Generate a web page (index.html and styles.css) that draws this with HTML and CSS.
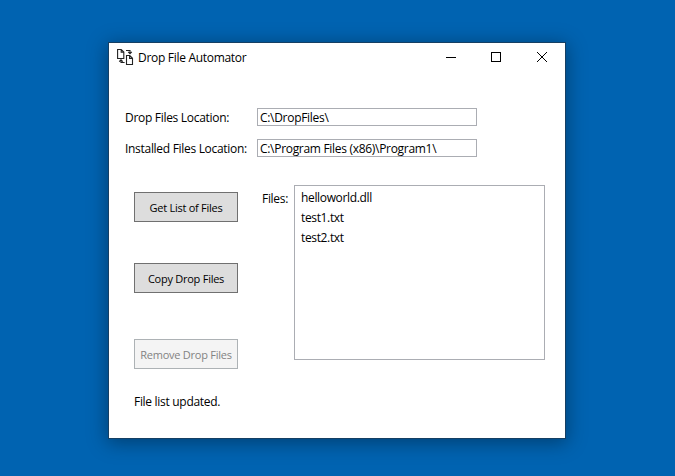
FILE: index.html
```html
<!DOCTYPE html>
<html lang="en">
<head>
<meta charset="utf-8">
<title>Drop File Automator</title>
<link rel="stylesheet" href="styles.css">
</head>
<body>
<main class="window">
  <header class="titlebar">
    <svg class="app-icon" width="17" height="18" viewBox="0 0 17 18" fill="none" stroke="#222" stroke-width="1.1">
      <path d="M.6 1.5H4.2L6.8 4V10.5H.6ZM4.2 1.5V4.2H6.8"/>
      <path d="M9.5 7.5H12.8L15.5 10.2V16.5H9.5ZM12.6 7.5V10.4H15.5"/>
      <path d="M9 2.5H13V5.4M11.2 3.8L13 5.6L14.8 3.8M7.6 14.5H4V12M2.2 13.6L4 11.8L5.8 13.6"/>
    </svg>
    <h1 class="title">Drop File Automator</h1>
    <div class="controls">
      <svg width="12" height="12" viewBox="0 0 12 12" stroke="#000" fill="none"><path d="M2 6.5H12"/></svg>
      <svg width="12" height="12" viewBox="0 0 12 12" stroke="#000" fill="none" shape-rendering="crispEdges"><path d="M1.5 1.5H10.5V10.5H1.5Z"/></svg>
      <svg width="12" height="12" viewBox="0 0 12 12" stroke="#000" fill="none"><path d="M1 1L11 11M11 1L1 11"/></svg>
    </div>
  </header>
  <section class="paths">
    <span class="label">Drop Files Location:</span>
    <div class="field">C:\DropFiles\</div>
    <span class="label">Installed Files Location:</span>
    <div class="field">C:\Program Files (x86)\Program1\</div>
  </section>
  <section class="work">
    <div class="actions">
      <button class="btn">Get List of Files</button>
      <button class="btn btn-copy">Copy Drop Files</button>
      <button class="btn" disabled>Remove Drop Files</button>
    </div>
    <span class="files-label">Files:</span>
    <ul class="files">
      <li>helloworld.dll</li>
      <li>test1.txt</li>
      <li>test2.txt</li>
    </ul>
  </section>
  <p class="status">File list updated.</p>
</main>
</body>
</html>
```
FILE: styles.css
```css
* { box-sizing: border-box; }
body {
  margin: 0;
  height: 476px;
  overflow: hidden;
  padding: 42px 0 0 108px;
  background: #0063b1;
  font: 12px/16px "Open Sans", "Noto Sans", sans-serif;
  letter-spacing: -0.3px;
  color: #000;
}
.window {
  width: 458px;
  height: 397px;
  border: 1px solid #153f63;
  background: #fff;
  box-shadow: 0 3px 18px 1px rgba(0, 0, 0, .35);
}
.titlebar {
  display: flex;
  height: 30px;
  padding-left: 8px;
}
.app-icon { margin: 5px 4px 0 0; }
.title {
  margin: 7px 0 0;
  font-size: 12px;
  font-weight: 400;
  line-height: 16px;
  white-space: nowrap;
}
.controls {
  display: flex;
  gap: 34px;
  margin: 8px 17px 0 auto;
}
.controls svg { display: block; }
.paths {
  display: grid;
  grid-template-columns: 132px 220px;
  row-gap: 13px;
  margin: 35px 0 0 16px;
}
.label { padding-top: 2px; white-space: nowrap; }
.field {
  height: 18px;
  padding-left: 2px;
  border: 1px solid #abadb3;
  line-height: 18px;
  white-space: nowrap;
}
.work {
  display: flex;
  height: 184px;
  margin: 28px 0 0 25px;
}
.actions {
  display: flex;
  flex-direction: column;
  width: 104px;
  padding-top: 7px;
}
.btn {
  height: 30px;
  padding: 2px 0 0;
  border: 1px solid #707070;
  background: #ddd;
  color: #000;
  font: inherit;
  font-size: 11px;
  letter-spacing: -0.25px;
  text-align: center;
  white-space: nowrap;
}
.btn-copy { margin: 41px 0 46px; }
.btn:disabled {
  border-color: #adb2b5;
  background: #f4f4f4;
  color: #838383;
}
.files-label { width: 32px; margin: 6px 0 0 24px; white-space: nowrap; }
.files {
  width: 251px;
  height: 175px;
  margin: 0;
  padding: 2px 0 0 6px;
  border: 1px solid #abadb3;
  list-style: none;
  line-height: 20px;
  letter-spacing: -0.35px;
}
.status { margin: 25px 0 0 25px; }
```
